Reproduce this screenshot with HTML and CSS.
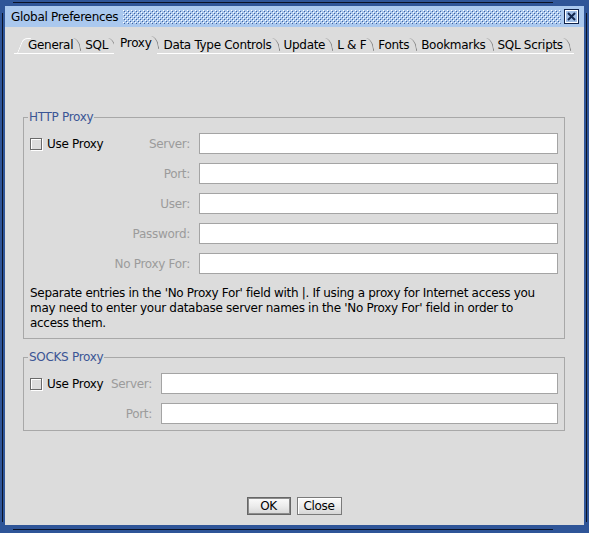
FILE: index.html
```html
<!DOCTYPE html>
<html>
<head>
<meta charset="utf-8">
<title>Global Preferences</title>
<link rel="stylesheet" href="styles.css">
</head>
<body>
<div class="frame">
  <div class="titlebar">
    <span class="title">Global Preferences</span>
    <svg class="bumps" xmlns="http://www.w3.org/2000/svg">
      <defs>
        <pattern id="bump" width="4" height="4" patternUnits="userSpaceOnUse">
          <rect x="0" y="0" width="1" height="1" fill="#ffffff"/>
          <rect x="2" y="2" width="1" height="1" fill="#ffffff"/>
          <rect x="1" y="1" width="1" height="1" fill="#3d5f9e"/>
          <rect x="3" y="3" width="1" height="1" fill="#3d5f9e"/>
        </pattern>
      </defs>
      <rect width="100%" height="100%" fill="url(#bump)"/>
    </svg>
    <svg class="close" viewBox="0 0 15 15" xmlns="http://www.w3.org/2000/svg">
      <rect x="0" y="0" width="15" height="15" fill="#10224a"/>
      <rect x="1" y="1" width="13" height="13" fill="#ffffff"/>
      <rect x="2" y="2" width="11" height="11" fill="#9fbde6"/>
      <path d="M4 4 L11 11 M11 4 L4 11" stroke="#14284f" stroke-width="2" fill="none"/>
    </svg>
  </div>
  <div class="content">
    <div class="tabs">
      <div class="tab first">General</div>
      <div class="tab">SQL</div>
      <div class="tab sel">Proxy</div>
      <div class="tab">Data Type Controls</div>
      <div class="tab">Update</div>
      <div class="tab">L &amp; F</div>
      <div class="tab">Fonts</div>
      <div class="tab">Bookmarks</div>
      <div class="tab">SQL Scripts</div>
    </div>
    <div class="panel">
      <fieldset class="group http">
        <legend>HTTP Proxy</legend>
        <div class="grid">
          <label class="check"><span class="box"></span>Use Proxy</label>
          <span class="lbl">Server:</span><span class="field"></span>
          <span></span><span class="lbl">Port:</span><span class="field"></span>
          <span></span><span class="lbl">User:</span><span class="field"></span>
          <span></span><span class="lbl">Password:</span><span class="field"></span>
          <span></span><span class="lbl">No Proxy For:</span><span class="field"></span>
        </div>
        <p class="note">Separate entries in the 'No Proxy For' field with |. If using a proxy for Internet access you<br>may need to enter your database server names in the 'No Proxy For' field in order to<br>access them.</p>
      </fieldset>
      <fieldset class="group socks">
        <legend>SOCKS Proxy</legend>
        <div class="grid">
          <label class="check"><span class="box"></span>Use Proxy</label>
          <span class="lbl">Server:</span><span class="field"></span>
          <span></span><span class="lbl">Port:</span><span class="field"></span>
        </div>
      </fieldset>
    </div>
    <div class="buttons">
      <button class="btn ok">OK</button>
      <button class="btn cancel">Close</button>
    </div>
  </div>
</div>
</body>
</html>
```

FILE: styles.css
```css
* { box-sizing: border-box; }
html, body { margin: 0; padding: 0; }
body {
  width: 589px;
  height: 533px;
  overflow: hidden;
  font-family: "DejaVu Sans", sans-serif;
  font-size: 12px;
  letter-spacing: -0.3px;
  color: #000;
  background: #2f5598;
}
.frame {
  position: relative;
  width: 589px;
  height: 533px;
  background: #2f5598;
  padding: 6px 5px 8px 5px;
  display: flex;
  flex-direction: column;
}
.frame::before {
  content: "";
  position: absolute;
  left: 2px; right: 2px; top: 13px; bottom: 11px;
  border-left: 1px solid #0a1226;
  border-right: 1px solid #0a1226;
}
.frame::after {
  content: "";
  position: absolute;
  left: 13px; right: 36px; top: 2px; bottom: 3px;
  border-top: 1px solid #0a1226;
  border-bottom: 1px solid #0a1226;
}
.titlebar {
  height: 21px;
  flex: none;
  background: #aac8ee;
  display: flex;
  align-items: center;
  padding: 0 5px 0 6px;
}
.title { white-space: nowrap; margin-right: 5px; }
.bumps { flex: 1 1 0; min-width: 0; height: 14px; display: block; }
.close { width: 15px; height: 15px; margin-left: 3px; flex: none; display: block; }

.content {
  flex: 1;
  background: #dcdcdc;
  display: flex;
  flex-direction: column;
  padding: 8px 10px 10px 9px;
}
.tabs {
  display: flex;
  align-items: flex-end;
  height: 19px;
  border-bottom: 1px solid #ffffff;
  padding-left: 3px;
}
.tab {
  position: relative;
  height: 16px;
  line-height: 16px;
  padding: 0 6px;
  white-space: nowrap;
}
.tab.first { padding-left: 11px; }
.tab.sel {
  height: 19px;
  line-height: 17px;
  margin-bottom: -1px;
  background: #dcdcdc;
  z-index: 1;
}
.tab::after {
  content: "";
  position: absolute;
  right: 0;
  top: 1px;
  height: 13px;
  width: 6px;
  border-right: 1px solid #858585;
  border-top-right-radius: 6px 9px;
  transform: skewX(10deg);
  transform-origin: top left;
}
.tab.first::before {
  content: "";
  position: absolute;
  left: 0;
  top: 1px;
  bottom: 0;
  width: 7px;
  border-left: 1px solid #ffffff;
  border-top: 1px solid #ffffff;
  border-top-left-radius: 5px;
  transform: skewX(-22deg);
  transform-origin: bottom left;
}

.panel {
  padding: 56px 9px 0 9px;
  display: flex;
  flex-direction: column;
}
.group {
  margin: 0;
  min-width: 0;
  border: 1px solid #a8a8a8;
  padding: 9px 6px 6px 6px;
}
.group.http { padding-bottom: 7px; }
.group.socks { margin-top: 11px; }
legend {
  padding: 0 1px;
  margin-left: -2px;
  line-height: 14px;
  color: #3a5595;
}
.grid {
  display: grid;
  grid-auto-rows: 21px;
  row-gap: 9px;
  align-items: center;
}
.http .grid { grid-template-columns: 77px 92px 1fr; }
.socks .grid { grid-template-columns: 78px 53px 1fr; }
.lbl {
  text-align: right;
  padding-right: 9px;
  color: #9b9b9b;
  white-space: nowrap;
}
.field {
  display: block;
  height: 21px;
  background: #ffffff;
  border: 1px solid #a4a4a4;
}
.check {
  display: flex;
  align-items: center;
  gap: 5px;
  white-space: nowrap;
}
.box {
  width: 12px;
  height: 12px;
  flex: none;
  border: 1px solid #6a6a6a;
  box-shadow: inset 1px 1px 0 #ffffff, 1px 1px 0 #ffffff;
}
.note {
  margin: 12px 0 0 0;
  line-height: 15px;
  white-space: nowrap;
}
.buttons {
  margin-top: auto;
  display: flex;
  justify-content: center;
  gap: 6px;
}
.btn {
  height: 18px;
  padding: 0;
  font: inherit;
  letter-spacing: inherit;
  line-height: 16px;
  color: #000;
  border: 1px solid #7a7a7a;
  background: linear-gradient(#fbfbfb, #ececec 50%, #d6d6d6);
  box-shadow: inset 1px 1px 0 #ffffff;
}
.ok {
  width: 44px;
  border-color: #666666;
  box-shadow: inset 0 0 0 1px #8c8c8c;
}
.cancel { width: 45px; }
```
